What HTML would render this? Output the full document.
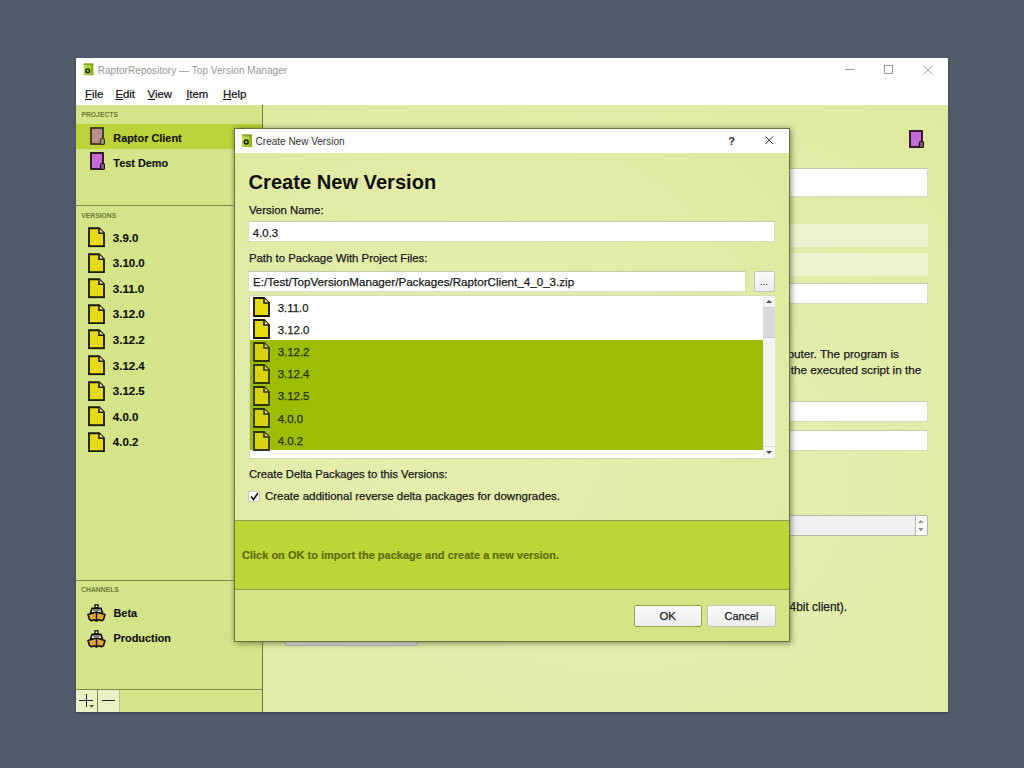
<!DOCTYPE html>
<html><head><meta charset="utf-8">
<style>
*{box-sizing:border-box;margin:0;padding:0}
html,body{width:1024px;height:768px;overflow:hidden}
body{background:#515c6b;font-family:"Liberation Sans",sans-serif;color:#1a1a1a;position:relative}
.a{position:absolute}
.t{position:absolute;white-space:pre;line-height:1}
#win{left:76px;top:58px;width:872px;height:654px;background:#fff;overflow:hidden;box-shadow:0 1px 2px rgba(0,0,0,0.35)}
#wbody{left:0;top:47px;width:872px;height:607px;background:radial-gradient(ellipse 640px 520px at 540px 380px,#e6efb2 0%,#e2eca8 55%,#dce89d 100%)}
#left{left:0;top:0;width:187px;height:607px;background:#d4e589;border-right:1px solid #6f7d45}
.sec{font-size:6.8px;font-weight:bold;color:#6c7c36;letter-spacing:0px}
.sep{left:0;width:186px;height:1px;background:#7f8c50}
.proj{font-size:10.9px;font-weight:bold;color:#111;-webkit-text-stroke:0.15px currentColor}
.ver{font-size:11.5px;font-weight:bold;color:#111;-webkit-text-stroke:0.15px currentColor}
.field{background:#fff;border:1px solid #d6dcc0;border-top-color:#c4c9b2}
.field2{background:#ecf3cf}
#dlg{left:234px;top:128px;width:556px;height:513.5px;background:radial-gradient(ellipse 420px 420px at 45% 60%,#e5eeae 0%,#e2eca8 55%,#dce89e 100%);border:1px solid #66733c;box-shadow:0 0 5px rgba(40,50,20,0.35),2px 2px 6px rgba(40,50,20,0.3)}
.lbl{font-size:11.4px;color:#1a1a1a;-webkit-text-stroke:0.25px currentColor}
.menu{top:31.2px;font-size:11.4px;color:#111;-webkit-text-stroke:0.2px currentColor}
#right{left:187px;top:0;width:685px;height:607px}
.spin{background:#efefef;border:1px solid #b4b9a6;border-radius:2px}
.tb{background:#eaf1c4}
.btn{background:linear-gradient(180deg,#fafafa,#ececec);border:1px solid #c3c7b8;border-radius:2px}
.btn.def{border-color:#94a24a}
</style></head><body>
<svg width="0" height="0" style="position:absolute">
<defs>
<symbol id="file" viewBox="0 0 17 20">
 <path d="M1 1H11.2L16 5.8V19H1Z" fill="#e6da12" stroke="#1b1a00" stroke-width="1.85" stroke-linejoin="miter"/>
 <path d="M11 1V6H16" fill="#eeeab0" stroke="#1b1a00" stroke-width="1.6"/>
</symbol>
<symbol id="projA" viewBox="0 0 15 18">
 <rect x="1" y="1" width="12" height="16" fill="#b88e8c" stroke="#3e3518" stroke-width="1.8"/>
 <rect x="10.5" y="11.5" width="4" height="6" rx="1.5" fill="#9c9a60" stroke="#3e3518" stroke-width="1.2"/>
</symbol>
<symbol id="projB" viewBox="0 0 15 18">
 <rect x="1" y="1" width="12" height="16" fill="#c56ad6" stroke="#1e0f1e" stroke-width="1.8"/>
 <rect x="10.5" y="11.5" width="4" height="6" rx="1.5" fill="#8a5a80" stroke="#1e0f1e" stroke-width="1.2"/>
</symbol>
<symbol id="ship" viewBox="0 0 19 18">
 <rect x="8" y="0.8" width="3" height="3" fill="#f3f0d0" stroke="#111" stroke-width="1.3"/>
 <path d="M5 4.2H14L15.5 9H3.5Z" fill="#f3f0d0" stroke="#111" stroke-width="1.6" stroke-linejoin="round"/>
 <path d="M5.8 6H13.2" stroke="#111" stroke-width="1"/>
 <path d="M1 10.5L9.5 8L18 10.5L16.5 15.5L14.5 16.8L12 15.8L9.5 17L7 15.8L4.5 16.8L2.5 15.5Z" fill="#e2a628" stroke="#111" stroke-width="1.6" stroke-linejoin="round"/>
 <path d="M9.5 8V17" stroke="#111" stroke-width="1.5"/>
</symbol>
<symbol id="appico" viewBox="0 0 10 13">
 <defs><linearGradient id="ag" x1="0" y1="0" x2="1" y2="1"><stop offset="0" stop-color="#c6e458"/><stop offset="1" stop-color="#94bc22"/></linearGradient></defs>
 <rect x="0" y="1" width="10" height="12" fill="url(#ag)"/>
 <rect x="7.3" y="1" width="2.7" height="12" fill="#8fb41c"/>
 <rect x="0" y="0.3" width="10" height="2" fill="#86a52a"/>
 <circle cx="4.2" cy="8" r="1.9" fill="#b8d650" stroke="#142200" stroke-width="1.5"/>
</symbol>
<symbol id="fileSel" viewBox="0 0 17 20">
 <path d="M1 1H11.2L16 5.8V19H1Z" fill="#d6d30c" stroke="#323400" stroke-width="1.8" stroke-linejoin="miter"/>
 <path d="M11 1V6H16" fill="#d8dc90" stroke="#323400" stroke-width="1.6"/>
</symbol>
</defs></svg>

<div id="win" class="a">
  <!-- title bar -->
  <svg class="a" style="left:7px;top:5.2px" width="11" height="12.5"><use href="#appico"/></svg>
  <div class="t" style="left:21.7px;top:8.4px;font-size:10.1px;color:#979797">RaptorRepository — Top Version Manager</div>
  <div class="a" style="left:769px;top:11px;width:9px;height:1px;background:#9a9a9a"></div>
  <div class="a" style="left:808px;top:7px;width:9px;height:9px;border:1px solid #9a9a9a"></div>
  <svg class="a" style="left:847px;top:7px" width="10" height="10" viewBox="0 0 10 10"><path d="M0.5 0.5L9.5 9.5M9.5 0.5L0.5 9.5" stroke="#9a9a9a" stroke-width="0.9"/></svg>
  <!-- menu -->
  <div class="t menu" style="left:9px"><u>F</u>ile</div>
  <div class="t menu" style="left:39.4px"><u>E</u>dit</div>
  <div class="t menu" style="left:71.6px"><u>V</u>iew</div>
  <div class="t menu" style="left:110.2px"><u>I</u>tem</div>
  <div class="t menu" style="left:147px"><u>H</u>elp</div>

  <div id="wbody" class="a">
    <div id="right" class="a">
      <svg class="a" style="left:646.4px;top:24.9px" width="15" height="18"><use href="#projB"/></svg>
      <div class="a field" style="left:22px;top:63px;width:643.2px;height:29px"></div>
      <div class="a field2" style="left:22px;top:119px;width:643.2px;height:23px"></div>
      <div class="a field2" style="left:22px;top:148px;width:643.2px;height:23px"></div>
      <div class="a field" style="left:22px;top:178px;width:643.2px;height:21px"></div>
      <div class="t lbl" style="right:49.1px;top:242.5px;font-size:11.75px">this is the computer. The program is</div>
      <div class="t lbl" style="right:26.7px;top:258.5px;font-size:11.75px">the working directory  the executed script in the</div>
      <div class="a field" style="left:22px;top:295.5px;width:643.2px;height:21.5px"></div>
      <div class="a field" style="left:22px;top:325px;width:643.2px;height:21px"></div>
      <div class="a spin" style="left:22px;top:410.3px;width:643.2px;height:20.3px"></div>
      <div class="a" style="left:651.6px;top:411.3px;width:12.6px;height:18.3px;background:#fafafa;border-left:1px solid #b4b9a6;border-radius:0 2px 2px 0"></div>
      <svg class="a" style="left:655px;top:415.2px" width="6" height="12"><path d="M0 3H5.6L2.8 0Z M0 8H5.6L2.8 11.3Z" fill="#8e8e8e"/></svg>
      <div class="t lbl" style="right:100.9px;top:496.6px;font-size:11.9px">32bit or 64bit client).</div>
      <div class="a" style="left:21.5px;top:530px;width:133px;height:11px;background:#e6e6e6;border:1px solid #b8b8b8;border-radius:2px"></div>
    </div>
    <div id="left" class="a">
      <div class="t sec" style="left:5.4px;top:7.3px">PROJECTS</div>
      <div class="a" style="left:0;top:19px;width:186px;height:24.5px;background:#bcd43a"></div>
      <svg class="a" style="left:14px;top:21.5px" width="15" height="18"><use href="#projA"/></svg>
      <svg class="a" style="left:14px;top:47px" width="15" height="18"><use href="#projB"/></svg>
      <div class="t proj" style="left:37.3px;top:27.8px">Raptor Client</div>
      <div class="t proj" style="left:37.3px;top:53.3px">Test Demo</div>
      <div class="a sep" style="top:100px"></div>
      <div class="t sec" style="left:5.2px;top:108.2px">VERSIONS</div>
      <svg class="a" style="left:12.3px;top:122.00px" width="17" height="20.6"><use href="#file"/></svg><div class="t ver" style="left:36.8px;top:127.57px">3.9.0</div>
      <svg class="a" style="left:12.3px;top:147.60px" width="17" height="20.6"><use href="#file"/></svg><div class="t ver" style="left:36.8px;top:153.17px">3.10.0</div>
      <svg class="a" style="left:12.3px;top:173.20px" width="17" height="20.6"><use href="#file"/></svg><div class="t ver" style="left:36.8px;top:178.77px">3.11.0</div>
      <svg class="a" style="left:12.3px;top:198.80px" width="17" height="20.6"><use href="#file"/></svg><div class="t ver" style="left:36.8px;top:204.37px">3.12.0</div>
      <svg class="a" style="left:12.3px;top:224.40px" width="17" height="20.6"><use href="#file"/></svg><div class="t ver" style="left:36.8px;top:229.97px">3.12.2</div>
      <svg class="a" style="left:12.3px;top:250.00px" width="17" height="20.6"><use href="#file"/></svg><div class="t ver" style="left:36.8px;top:255.57px">3.12.4</div>
      <svg class="a" style="left:12.3px;top:275.60px" width="17" height="20.6"><use href="#file"/></svg><div class="t ver" style="left:36.8px;top:281.17px">3.12.5</div>
      <svg class="a" style="left:12.3px;top:301.20px" width="17" height="20.6"><use href="#file"/></svg><div class="t ver" style="left:36.8px;top:306.77px">4.0.0</div>
      <svg class="a" style="left:12.3px;top:326.80px" width="17" height="20.6"><use href="#file"/></svg><div class="t ver" style="left:36.8px;top:332.37px">4.0.2</div>
      <div class="a sep" style="top:474.5px"></div>
      <div class="t sec" style="left:5.1px;top:482.3px">CHANNELS</div>
      <svg class="a" style="left:11px;top:499.4px" width="19" height="18"><use href="#ship"/></svg>
      <svg class="a" style="left:11px;top:524.8px" width="19" height="18"><use href="#ship"/></svg>
      <div class="t proj" style="left:37.5px;top:502.7px">Beta</div>
      <div class="t proj" style="left:37.5px;top:527.8px">Production</div>
      <div class="a sep" style="top:583.5px"></div>
      <div class="a tb" style="left:0;top:584.5px;width:21.5px;height:22.5px;border-right:1px solid #7f8c50"></div>
      <div class="a tb" style="left:21.5px;top:584.5px;width:22px;height:22.5px;border-right:1px solid #b8c680"></div>
      <div class="a" style="left:3.3px;top:594.8px;width:13.7px;height:1.4px;background:#222"></div>
      <div class="a" style="left:9.8px;top:588.8px;width:1.4px;height:13.3px;background:#222"></div>
      <svg class="a" style="left:13.4px;top:599.5px" width="6" height="3"><path d="M0 0H5.2L2.6 2.8Z" fill="#55601f"/></svg>
      <div class="a" style="left:25.5px;top:594.8px;width:13.7px;height:1.4px;background:#222"></div>
    </div>
  </div>
</div>

<div id="dlg" class="a">
  <div class="a" style="left:0;top:0;width:554px;height:24px;background:#fff"></div>
  <svg class="a" style="left:7.2px;top:5px" width="10" height="13"><use href="#appico"/></svg>
  <div class="t" style="left:20.6px;top:8.1px;font-size:10px;color:#333">Create New Version</div>
  <div class="t" style="left:493.2px;top:7px;font-size:11px;font-weight:bold;color:#2a2a2a">?</div>
  <svg class="a" style="left:530.2px;top:7.3px" width="8.5" height="8.5" viewBox="0 0 9 9"><path d="M0.5 0.5L8.5 8.5M8.5 0.5L0.5 8.5" stroke="#222" stroke-width="1.05"/></svg>
  <div class="t" style="left:13.6px;top:42.7px;font-size:20.1px;font-weight:bold;color:#111">Create New Version</div>
  <div class="t lbl" style="left:13.9px;top:76px">Version Name:</div>
  <div class="a field" style="left:13.4px;top:92.3px;width:526.6px;height:21px"></div>
  <div class="t lbl" style="left:17.8px;top:99.1px">4.0.3</div>
  <div class="t lbl" style="left:13.9px;top:124.3px">Path to Package With Project Files:</div>
  <div class="a field" style="left:13.4px;top:141.5px;width:497.6px;height:21px"></div>
  <div class="t lbl" style="left:18px;top:146.55px;font-size:11.63px">E:/Test/TopVersionManager/Packages/RaptorClient_4_0_3.zip</div>
  <div class="a btn" style="left:518.8px;top:141.5px;width:21.2px;height:21px"></div>
  <div class="t" style="left:524.8px;top:148px;font-size:10px;color:#222">...</div>
  <div id="list" class="a" style="left:13.6px;top:166px;width:526.4px;height:163.5px;background:#fff;border:1px solid #d3dcb4">
    <div class="a" style="left:0;top:44.3px;width:513.5px;height:110px;background:#9dbd03"></div>
    <svg class="a" style="left:3.6px;top:1.10px" width="17" height="20"><use href="#file"/></svg><div class="t lbl" style="left:28.2px;top:6.75px;color:#1a1a1a">3.11.0</div>
    <svg class="a" style="left:3.6px;top:23.37px" width="17" height="20"><use href="#file"/></svg><div class="t lbl" style="left:28.2px;top:28.90px;color:#1a1a1a">3.12.0</div>
    <svg class="a" style="left:3.6px;top:45.64px" width="17" height="20"><use href="#fileSel"/></svg><div class="t lbl" style="left:28.2px;top:51.05px;color:#263000">3.12.2</div>
    <svg class="a" style="left:3.6px;top:67.91px" width="17" height="20"><use href="#fileSel"/></svg><div class="t lbl" style="left:28.2px;top:73.20px;color:#263000">3.12.4</div>
    <svg class="a" style="left:3.6px;top:90.18px" width="17" height="20"><use href="#fileSel"/></svg><div class="t lbl" style="left:28.2px;top:95.35px;color:#263000">3.12.5</div>
    <svg class="a" style="left:3.6px;top:112.45px" width="17" height="20"><use href="#fileSel"/></svg><div class="t lbl" style="left:28.2px;top:117.50px;color:#263000">4.0.0</div>
    <svg class="a" style="left:3.6px;top:134.72px" width="17" height="20"><use href="#fileSel"/></svg><div class="t lbl" style="left:28.2px;top:139.65px;color:#263000">4.0.2</div>
    <div class="a" style="left:513.5px;top:0;width:11.5px;height:161px;background:#f4f4f4;border-left:1px solid #e4e4e4"></div>
    <div class="a" style="left:513.5px;top:11px;width:11.5px;height:30.5px;background:#dadada;border-top:1px solid #d0d0d0;border-bottom:1px solid #cdcdcd"></div><div class="a" style="left:513.5px;top:150.2px;width:11.5px;height:1px;background:#dedede"></div>
    <svg class="a" style="left:516.6px;top:4.2px" width="7" height="4"><path d="M0 3H6.2L3.1 0Z" fill="#505050"/></svg>
    <svg class="a" style="left:516.6px;top:155px" width="7" height="4"><path d="M0 0H6.2L3.1 3Z" fill="#505050"/></svg>
  </div>
  <div class="t lbl" style="left:13.9px;top:339.55px;font-size:11.27px">Create Delta Packages to this Versions:</div>
  <div class="a" style="left:13.4px;top:361.6px;width:11.5px;height:11px;background:#fff;border:1px solid #c8d0b0"></div>
  <svg class="a" style="left:15px;top:363px" width="9" height="9" viewBox="0 0 9 9"><path d="M1 4.6L3.4 7.6L8 1" fill="none" stroke="#111" stroke-width="1.6"/></svg>
  <div class="t lbl" style="left:29.9px;top:361.75px;font-size:11.53px">Create additional reverse delta packages for downgrades.</div>
  <div class="a" style="left:0;top:391px;width:554px;height:70px;background:#bdd535;border-top:1px solid #8f9e4c;border-bottom:1px solid #8f9e4c"></div>
  <div class="t" style="left:7px;top:420.7px;font-size:11.03px;font-weight:bold;color:#5b6c12;-webkit-text-stroke:0.15px currentColor">Click on OK to import the package and create a new version.</div>
  <div class="a" style="left:0;top:461px;width:554px;height:51px;background:#d5e487"></div>
  <div class="a btn def" style="left:399px;top:476px;width:68px;height:22px"></div>
  <div class="t lbl" style="left:424.5px;top:482.1px">OK</div>
  <div class="a btn" style="left:472.3px;top:476px;width:68.8px;height:22px"></div>
  <div class="t lbl" style="left:489.6px;top:482.1px;font-size:10.92px">Cancel</div>
</div>
</body></html>
